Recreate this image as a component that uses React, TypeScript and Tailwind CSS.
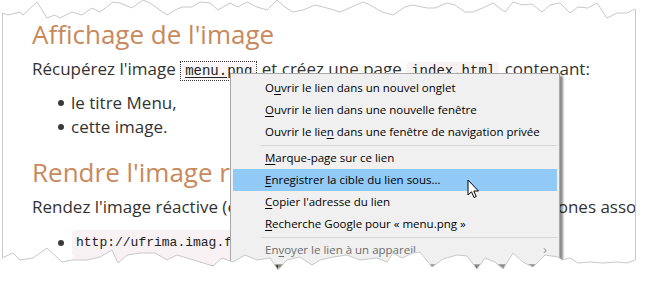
import type { ReactNode } from 'react'

const TOP: [number, number][] = [
  [2, 13], [8, 15], [20, 12], [23, 15], [37, 2], [47, 18], [55, 15], [60, 18], [72, 12], [82, 15],
  [92, 8], [100, 12], [113, 2], [120, 3], [132, 8], [143, 0], [150, 3], [157, 8], [167, 15], [175, 10],
  [182, 7], [192, 7], [200, 2], [210, 3], [218, 10], [230, 3], [238, 7], [247, 2], [257, 7], [267, 10],
  [277, 0], [285, 7], [293, 12], [303, 10], [315, 5], [327, 8], [340, 12], [363, 2], [370, 5], [382, 12],
  [393, 15], [405, 7], [412, 5], [427, 8], [435, 8], [447, 3], [455, 5], [465, 12], [473, 12], [485, 7],
  [493, 3], [505, 12], [513, 2], [522, 5], [532, 4], [542, 12], [550, 5], [560, 3], [570, 13], [578, 7],
  [588, 8], [597, 3], [607, 18], [617, 13], [627, 13], [635, 9],
]

const BOTTOM: [number, number][] = [
  [2, 258], [13, 253], [20, 260], [33, 258], [47, 248], [62, 262], [72, 260], [87, 260], [100, 257],
  [112, 250], [118, 263], [127, 255], [140, 253], [155, 253], [167, 260], [177, 255], [187, 258],
  [200, 262], [213, 266], [222, 258], [233, 262], [245, 255], [257, 260], [270, 258], [278, 270],
  [287, 260], [300, 257], [312, 265], [320, 260], [333, 257], [347, 255], [360, 260], [377, 258],
  [387, 262], [393, 253], [402, 258], [413, 253], [420, 252], [432, 267], [443, 259], [457, 255],
  [467, 256], [477, 269], [485, 258], [495, 262], [503, 269], [513, 253], [523, 262], [533, 267],
  [545, 255], [558, 257], [562, 260], [570, 258], [578, 263], [590, 262], [603, 263], [617, 262],
  [627, 263], [635, 260],
]

const pts = (p: [number, number][]) => p.map(([x, y]) => `${x},${y}`).join(' ')

function TornEdges() {
  const topFill = `0,0 651,0 651,${TOP[TOP.length - 1][1]} ${pts([...TOP].reverse())} 0,13`
  const bottomFill = `0,287 651,287 651,${BOTTOM[BOTTOM.length - 1][1]} ${pts([...BOTTOM].reverse())} 0,258`
  return (
    <svg className="absolute inset-0 pointer-events-none" width={651} height={287}>
      <polygon points={topFill} fill="#ffffff" />
      <polygon points={bottomFill} fill="#ffffff" />
      <polyline points={pts(TOP)} fill="none" stroke="#c8c8c8" strokeWidth={1} />
      <polyline points={pts(BOTTOM)} fill="none" stroke="#c8c8c8" strokeWidth={1} />
    </svg>
  )
}

function Code({ children, focused, small }: { children: ReactNode; focused?: boolean; small?: boolean }) {
  return (
    <span
      className={
        (focused
          ? 'mx-[1px] px-[4px] py-[1px] bg-[#faf5f6] outline-1 outline-dotted outline-[#333] underline underline-offset-2 '
          : 'mx-[1px] px-[4px] py-[1px] rounded-[3px] bg-[#f9f2f4] ') +
        "text-[#222] font-['Liberation_Mono',monospace] " +
        (small ? 'text-[13px]' : 'text-[14px]')
      }
    >
      {children}
    </span>
  )
}

function Bullet({ children }: { children: ReactNode }) {
  return (
    <li className="flex items-center">
      <span className="w-[6px] h-[6px] rounded-full bg-[#3a3a3a] ml-[26px] mr-[7px] shrink-0" />
      {children}
    </li>
  )
}

type MenuItem = { pre?: string; key: string; post: string; active?: boolean; disabled?: boolean; sub?: boolean } | 'sep'

const items: MenuItem[] = [
  { pre: 'O', key: 'u', post: 'vrir le lien dans un nouvel onglet' },
  { key: 'O', post: 'uvrir le lien dans une nouvelle fenêtre' },
  { pre: 'Ouvrir le lie', key: 'n', post: ' dans une fenêtre de navigation privée' },
  'sep',
  { key: 'M', post: 'arque-page sur ce lien' },
  { key: 'E', post: 'nregistrer la cible du lien sous…', active: true },
  { key: 'C', post: "opier l'adresse du lien" },
  { key: 'R', post: 'echerche Google pour « menu.png »' },
  'sep',
  { pre: 'En', key: 'v', post: 'oyer le lien à un appareil', disabled: true, sub: true },
]

function ContextMenu() {
  return (
    <div className="absolute left-[230px] top-[73px] w-[330px] bg-[#f0f0f0] border border-[#a8a8a8] shadow-[3px_3px_2px_rgba(0,0,0,0.45)] pt-[3px] pb-[3px] font-['Open_Sans',sans-serif] text-[11.5px]">
      {items.map((it, i) =>
        it === 'sep' ? (
          <div key={i} className="h-[4px] flex items-center pl-[30px] pr-[2px]">
            <div className="h-px w-full bg-[#d7d7d7]" />
          </div>
        ) : (
          <div
            key={i}
            className={
              'h-[22px] mx-[2px] pl-[32px] pr-[10px] flex items-center justify-between ' +
              (it.active ? 'bg-[#91c9f7] ' : '') +
              (it.disabled ? 'text-[#6d6d6d]' : 'text-[#000]')
            }
          >
            <span>
              {it.pre}
              <span className="underline underline-offset-[2px]">{it.key}</span>
              {it.post}
            </span>
            {it.sub && <span className="text-[#9a9a9a] text-[13px]">›</span>}
          </div>
        )
      )}
    </div>
  )
}

function Cursor() {
  return (
    <svg className="absolute left-[467px] top-[179px]" width={14} height={21} viewBox="0 0 14 21">
      <path d="M1 1 L1 16 L4.5 12.8 L7 18.5 L9.2 17.5 L6.8 12 L11.5 12 Z" fill="#fff" stroke="#000" strokeWidth={1} strokeLinejoin="miter" />
    </svg>
  )
}

export default function App() {
  return (
    <div className="relative w-[651px] h-[287px] bg-white overflow-hidden font-['Open_Sans',sans-serif] text-[#333]">
      <div className="ml-[2px] w-[634px] h-full border-l border-r border-[#c8c8c8] overflow-hidden pl-[29px] pt-[18px] whitespace-nowrap">
        <h1 className="text-[26px] leading-[32px] text-[#c8895c]">Affichage de l'image</h1>
        <p className="mt-[7px] text-[17px] leading-[24px]">
          Récupérez l'image <Code focused>menu.png</Code> et créez une page <Code>index.html</Code> contenant:
        </p>
        <ul className="mt-[8px] text-[17px] leading-[24px]">
          <Bullet>le titre Menu,</Bullet>
          <Bullet>cette image.</Bullet>
        </ul>
        <h2 className="mt-[17px] text-[26px] leading-[32px] text-[#c8895c]">Rendre l'image réactive</h2>
        <p className="mt-[7px] text-[17px] leading-[24px]">
          Rendez l'image réactive (en définissant une map cliquable sur les zones associées)
        </p>
        <ul className="mt-[11px] text-[17px] leading-[24px]">
          <Bullet>
            <Code small>http://ufrima.imag.fr/menu-large.png</Code>
          </Bullet>
          <Bullet>
            <Code small>http://ufrima.imag.fr/menu.png</Code>&nbsp;pour la version mobile et la version graphique
          </Bullet>
        </ul>
      </div>
      <ContextMenu />
      <Cursor />
      <TornEdges />
    </div>
  )
}
